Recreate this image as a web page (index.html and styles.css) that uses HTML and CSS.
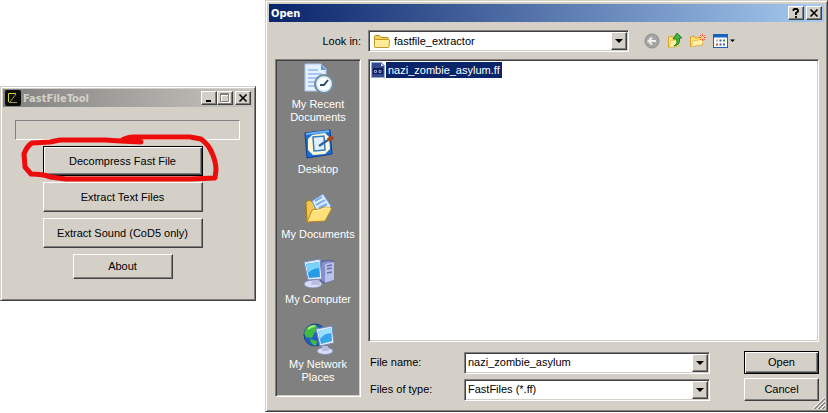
FILE: index.html
```
<!DOCTYPE html>
<html lang="en">
<head>
    <meta charset="UTF-8">
    <meta name="viewport" content="width=device-width, initial-scale=1.0">
    <title>FastFileTool</title>
    <link rel="stylesheet" href="styles.css">
</head>
<body>
    <div class="window tool">
        <div class="titlebar inactive">
            <svg class="app-icon" width="16" height="16" viewBox="0 0 16 16">
                <rect width="16" height="16" rx="2" fill="#0c0c08"/>
                <path d="M11 3.5H3.5V12" fill="none" stroke="#d8d62c"/>
                <path d="M4 12.5h8M5 12l6-8" fill="none" stroke="#9a9960"/>
            </svg>
            <h1 class="title">FastFileTool</h1>
            <button class="caption" aria-label="Minimize"><svg width="10" height="10" viewBox="0 0 10 10"><path d="M2 8h5" stroke="#000" stroke-width="2"/></svg></button>
            <button class="caption" aria-label="Maximize" disabled><svg width="10" height="10" viewBox="0 0 10 10"><path d="M1.5 1.5h8v8h-8zM1 2.5h9" fill="none" stroke="#fff"/><path d="M.5.5h8v8h-8zM0 1.5h9" fill="none" stroke="#808080"/></svg></button>
            <button class="caption close" aria-label="Close"><svg width="10" height="10" viewBox="0 0 10 10"><path d="M1.5 1.5l7 7M8.5 1.5l-7 7" stroke="#000" stroke-width="1.6"/></svg></button>
        </div>
        <div class="tool-body">
            <div class="progress" role="progressbar" aria-label="Progress"></div>
            <div class="actions">
                <button class="button default">Decompress Fast File</button>
                <button class="button">Extract Text Files</button>
                <button class="button">Extract Sound (CoD5 only)</button>
                <button class="button small">About</button>
            </div>
        </div>
        <svg class="marker" width="200" height="50" viewBox="20 133 200 50">
            <path d="M141 142L121 141Q126 137 134 137L190 137L201 139Q209 145 212 153Q216 162 216 170L215 178L190 179L66 179L50 177Q43 174 31 174L25 167L24 154Q27 146 32 143L50 142L60 140L105 140L121 141"/>
        </svg>
    </div>

    <div class="window dialog">
        <div class="titlebar">
            <h2 class="title">Open</h2>
            <button class="caption" aria-label="Help"><svg width="10" height="10" viewBox="0 0 10 10"><path d="M2.5 3V1.5L3.5 1H6l1 1v1.5L5 5v2M5 8v2" fill="none" stroke="#000" stroke-width="1.8"/></svg></button>
            <button class="caption close" aria-label="Close"><svg width="10" height="10" viewBox="0 0 10 10"><path d="M1.5 1.5l7 7M8.5 1.5l-7 7" stroke="#000" stroke-width="1.6"/></svg></button>
        </div>
        <div class="dialog-body">
            <label class="look-label" for="look">Look in:</label>
            <div class="toolbar">
                <div class="combo look">
                    <svg class="folder" width="16" height="16" viewBox="0 0 16 16">
                        <path d="M.5 13V3.5q0-1 1-1h4l2 2h6q1 0 1 1V13z" fill="#f3d05a" stroke="#b58a1c"/>
                        <path d="M1 14.5q-.5 0-.5-1v-6q0-1 1-1h13q1 0 1 1l-.5 6q0 1-1 1z" fill="#ffec94" stroke="#c69a28"/>
                    </svg>
                    <select id="look"><option>fastfile_extractor</option></select>
                    <span class="arrow"></span>
                </div>
                <div class="tools">
                    <button class="tool-button" aria-label="Back" disabled>
                        <svg width="16" height="16" viewBox="0 0 16 16"><circle cx="8" cy="8" r="7" fill="#a5a5a3" stroke="#8d8d8b"/><path d="M12 8H5M8 4.5L4.5 8 8 11.5" fill="none" stroke="#eee" stroke-width="2"/></svg>
                    </button>
                    <button class="tool-button" aria-label="Up one level">
                        <svg width="16" height="16" viewBox="0 0 16 16"><path d="M1.5 14.5V4l4-1 1 2 5-1v9z" fill="#ffe070" stroke="#d7a72c"/><path d="M2 14.5l2-7 9-1-2 7z" fill="#fff2a8" stroke="#e0b440" stroke-width=".7"/><path d="M7 13q4-2 2.5-7H6l4-6 5 5h-2.5q1 7-5.500 8z" fill="#3fb53b" stroke="#16731c" stroke-width=".8"/></svg>
                    </button>
                    <button class="tool-button" aria-label="New folder">
                        <svg width="16" height="16" viewBox="0 0 16 16"><path d="M.5 13.5V4l4-1 1 2 7-1v8z" fill="#ffe070" stroke="#e0a030"/><path d="M1 13.5L3 8l11-2-2 6z" fill="#fff3ad" stroke="#e5b040" stroke-width=".7"/><path d="M12.5 1v7M9 4.5h7M10 2l5 5M15 2l-5 5" stroke="#ee6237"/><circle cx="12.5" cy="4.5" r="1.5" fill="#ffd9a0"/></svg>
                    </button>
                    <button class="tool-button" aria-label="Views">
                        <svg width="22" height="16" viewBox="0 0 22 16"><rect x=".5" y="1.5" width="14" height="13" fill="#fff" stroke="#1763bd"/><path d="M0 3h15" stroke="#1763bd" stroke-width="3"/><path d="M3 7.5h2" stroke="#a7b5c5" stroke-width="2"/><path d="M6.5 7.5h2M6.5 11.5h2M10 11.5h2" stroke="#3c5ea8" stroke-width="2"/><path d="M10 7.5h2" stroke="#3a9a44" stroke-width="2"/><path d="M3 11.5h2" stroke="#c94f3d" stroke-width="2"/><path d="M17 6.5h5L19.5 9z"/></svg>
                    </button>
                </div>
            </div>

            <nav class="places">
                <a class="place" href="#">
                    <svg width="32" height="32" viewBox="0 0 32 32">
                        <path d="M3 1h16l5 5v22H3z" fill="#e4f0ff" stroke="#a9c8f2"/><path d="M19 1v6h5z" fill="#5f97df"/>
                        <path d="M6 7h10M6 11h14M6 15h9M6 19h7M6 23h7" stroke="#a6c6f1" stroke-width="2"/>
                        <circle cx="22" cy="21" r="9" fill="#d7e8ee" stroke="#6f8b9e" stroke-width="2"/><circle cx="22" cy="21" r="6.5" fill="#f7fcff"/>
                        <path d="M26 17l-4 5h-4" fill="none" stroke="#334e63" stroke-width="2"/>
                    </svg>
                    <span>My Recent Documents</span>
                </a>
                <a class="place" href="#">
                    <svg width="32" height="32" viewBox="0 0 32 32">
                        <path d="M3 5l25-3 2 24-25 4z" fill="#1d70d3" stroke="#0c3c96"/><path d="M4 6l23-3" stroke="#69b5ff" stroke-width="2"/>
                        <path d="M10 7l13-2 4 4 1 12-5 5-12 1-5-5V11z" fill="#fff8d2"/>
                        <path d="M11 9l11-1 1 14-11 1z" fill="#dff1ff" stroke="#327bc6" stroke-width="1.5"/>
                        <path d="M17 18l9-6" stroke="#32649d" stroke-width="2.5"/><path d="M26 12l5-3" stroke="#a94620" stroke-width="4"/>
                    </svg>
                    <span>Desktop</span>
                </a>
                <a class="place" href="#">
                    <svg width="32" height="32" viewBox="0 0 32 32">
                        <path d="M4 9l3-2 5 3 4 18L5 29z" fill="#f1c64d" stroke="#a97713"/>
                        <path d="M10 8l11-7 8 12-11 12z" fill="#d7eaff" stroke="#6c9bd7"/><path d="M13 8l7-4M14 12l9-5M17 15l8-4" stroke="#79aae3" stroke-width="2"/>
                        <path d="M5 29l5-12 7-1 5-2 8 1-7 13z" fill="#ffe179" stroke="#ba871c"/><path d="M11 18l7-1 5-2h5" fill="none" stroke="#fff5bd"/>
                    </svg>
                    <span>My Documents</span>
                </a>
                <a class="place" href="#">
                    <svg width="32" height="32" viewBox="0 0 32 32">
                        <path d="M19 4l8-2 5 2v18l-9 3-5-3z" fill="#8890cb" stroke="#515a99"/><path d="M23 6l9-2v18l-9 3z" fill="#b9c0eb"/><path d="M25 8l5-1M25 11l5-1M25 15l5-1" stroke="#6670ac" stroke-width="1.5"/>
                        <ellipse cx="11" cy="26" rx="9" ry="4" fill="#d9dcf3" stroke="#858cb9"/><path d="M10 21h7l1 6H9z" fill="#b8bde0"/>
                        <path d="M2 4l16-3 2 20-14 1z" fill="#e4ecff" stroke="#7189be"/><path d="M4 6l13-2 1 15-11 1z" fill="#249ce8"/><path d="M4 6l13-2 1 6q-7 0-12 5z" fill="#7ad2fb"/>
                    </svg>
                    <span>My Computer</span>
                </a>
                <a class="place" href="#">
                    <svg width="32" height="32" viewBox="0 0 32 32">
                        <circle cx="13" cy="12" r="11" fill="#2160be" stroke="#163f83"/><path d="M4 6q5-5 10-4l3 5-4 2-3 6-6-1-2-4zM8 16l7 2-1 5q-5-1-6-7z" fill="#41b945"/><path d="M6 6q3-3 7-3" stroke="#a3ef7c" stroke-width="2" fill="none"/>
                        <ellipse cx="23" cy="28" rx="8" ry="3.5" fill="#d9dcf3" stroke="#858cb9"/><path d="M20 23h6l1 5h-7z" fill="#b8bde0"/>
                        <path d="M14 6l16-3 2 17-14 3z" fill="#e4ecff" stroke="#7189be"/><path d="M16 8l13-3 1 13-11 3z" fill="#36a5eb"/><path d="M16 8l13-3 1 5q-8 0-12 6z" fill="#9be0ff"/>
                    </svg>
                    <span>My Network Places</span>
                </a>
            </nav>

            <div class="files">
                <a class="file" href="#">
                    <svg width="16" height="16" viewBox="0 0 16 16"><path d="M1.5.5h10l3 3v12h-13z" fill="#34488f" stroke="#9baacb"/><path d="M11 1v3h3z" fill="#dce5f4"/><path d="M3 6h10v6H3z" fill="#101d59"/><path d="M4.5 8.5h2v2h-2zM9 8.5h2v2H9z" fill="none" stroke="#93a2d0"/></svg>
                    <span>nazi_zombie_asylum.ff</span>
                </a>
            </div>

            <form class="fields">
                <label for="name">File name:</label>
                <div class="combo">
                    <input id="name" type="text" value="nazi_zombie_asylum">
                    <span class="arrow"></span>
                </div>
                <button class="button default" type="button">Open</button>
                <label for="type">Files of type:</label>
                <div class="combo">
                    <select id="type"><option>FastFiles (*.ff)</option></select>
                    <span class="arrow"></span>
                </div>
                <button class="button" type="button">Cancel</button>
            </form>
        </div>
        <svg class="grip" width="12" height="12" viewBox="0 0 12 12"><path d="M0 12L12 0M4 12l8-8M8 12l4-4" stroke="#fff"/><path d="M1 12L12 1M2 12L12 2M5 12l7-7M6 12l6-6M9 12l3-3M10 12l2-2" stroke="#8d8a84"/></svg>
    </div>
</body>
</html>
```

FILE: styles.css
```
* {
    box-sizing: border-box;
}
body {
    margin: 0;
    display: flex;
    align-items: flex-start;
    gap: 9px;
    background: #fff;
    color: #000;
    font-family: "Liberation Sans", Arial, sans-serif;
    font-size: 11px;
    line-height: 13px;
}
button, input, select {
    font: inherit;
    color: inherit;
    margin: 0;
}
svg {
    display: block;
    flex: none;
}
.window {
    position: relative;
    background: #d4d0c8;
    border: 1px solid;
    border-color: #d4d0c8 #404040 #404040 #d4d0c8;
    box-shadow: inset 1px 1px #fff, inset -1px -1px #808080;
}
.tool {
    flex: none;
    width: 256px;
    margin-top: 86px;
    padding: 2px;
}
.dialog {
    flex: 1;
    min-width: 0;
    padding: 3px;
}
.titlebar {
    display: flex;
    align-items: center;
    height: 18px;
    padding: 0 2px;
    background: linear-gradient(to right, #0a246a, #a6caf0);
    color: #fff;
}
.titlebar.inactive {
    background: linear-gradient(to right, #808080, #c8c5be);
    color: #d4d0c8;
}
.app-icon {
    margin-right: 2px;
}
.title {
    flex: 1;
    margin: 0;
    font-family: "DejaVu Sans Condensed", Tahoma, sans-serif;
    font-size: 11px;
    font-weight: bold;
}
.caption {
    display: flex;
    align-items: center;
    justify-content: center;
    width: 16px;
    height: 14px;
    padding: 0;
    background: #d4d0c8;
    border: 1px solid;
    border-color: #fff #404040 #404040 #fff;
    box-shadow: inset -1px -1px #808080;
}
.close {
    margin-left: 2px;
}
.tool-body {
    padding: 13px 13px 19px 12px;
}
.progress {
    height: 20px;
    margin-bottom: 6px;
    border: 1px solid;
    border-color: #808080 #fff #fff #808080;
}
.actions {
    display: flex;
    flex-direction: column;
    align-items: center;
    gap: 6px;
    padding-right: 10px;
}
.button {
    height: 23px;
    padding: 0;
    background: #d4d0c8;
    border: 1px solid;
    border-color: #fff #404040 #404040 #fff;
    box-shadow: inset -1px -1px #808080;
}
.button.default {
    border-color: #000;
    box-shadow: inset 1px 1px #fff, inset -1px -1px #404040, inset -2px -2px #808080;
}
.actions .button {
    width: 160px;
    height: 30px;
}
.actions .small {
    width: 100px;
    height: 25px;
}
.marker {
    position: absolute;
    left: 19px;
    top: 46px;
    pointer-events: none;
}
.marker path {
    fill: none;
    stroke: #ed0c0c;
    stroke-width: 5;
    stroke-linejoin: round;
    stroke-linecap: round;
}
.dialog-body {
    display: grid;
    grid-template-columns: 86px 1fr;
    grid-template-rows: 22px 283px auto;
    column-gap: 7px;
    row-gap: 7px;
    padding: 8px 5px 7px 6px;
}
.look-label {
    justify-self: end;
    align-self: center;
}
.toolbar {
    display: flex;
    align-items: center;
}
.combo {
    display: flex;
    height: 22px;
    padding: 1px;
    background: #fff;
    border: 1px solid;
    border-color: #808080 #fff #fff #808080;
    box-shadow: inset 1px 1px #404040, inset -1px -1px #d4d0c8;
}
.combo select, .combo input {
    flex: 1;
    min-width: 0;
    padding: 0 2px;
    border: 0;
    outline: 0;
    background: none;
    appearance: none;
}
.look {
    flex: 1;
}
.folder {
    margin: 1px 2px 0 4px;
}
.arrow {
    display: flex;
    align-items: center;
    justify-content: center;
    width: 16px;
    background: #d4d0c8;
    border: 1px solid;
    border-color: #fff #404040 #404040 #fff;
    box-shadow: inset -1px -1px #808080;
}
.arrow::before {
    content: "";
    border: 4px solid transparent;
    border-top-color: #000;
    border-bottom: 0;
}
.tools {
    display: flex;
    gap: 7px;
    width: 190px;
    padding-left: 15px;
}
.tool-button {
    padding: 0;
    border: 0;
    background: none;
}
.places {
    grid-row: 2 / 4;
    margin-bottom: 4px;
    padding: 3px 2px 0;
    background: #808080;
    border: 1px solid;
    border-color: #808080 #fff #fff #808080;
    box-shadow: inset 1px 1px #404040, inset -1px -1px #d4d0c8;
}
.place {
    display: flex;
    flex-direction: column;
    align-items: center;
    gap: 3px;
    height: 65px;
    color: #fff;
    text-align: center;
    text-decoration: none;
}
.files {
    padding: 2px;
    background: #fff;
    border: 1px solid;
    border-color: #808080 #fff #fff #808080;
    box-shadow: inset 1px 1px #404040, inset -1px -1px #d4d0c8;
}
.file {
    display: inline-flex;
    color: #fff;
    text-decoration: none;
}
.file svg {
    margin-left: -1px;
}
.file span {
    padding: 2px 2px 1px;
    background: #0a246a;
}
.fields {
    display: grid;
    grid-template-columns: 94px 1fr 75px;
    column-gap: 2px;
    row-gap: 4px;
    align-items: center;
    margin: 0;
    padding-top: 2px;
}
.fields label {
    padding-left: 2px;
}
.fields .combo {
    margin-right: 32px;
}
.grip {
    position: absolute;
    right: 2px;
    bottom: 2px;
}
```
